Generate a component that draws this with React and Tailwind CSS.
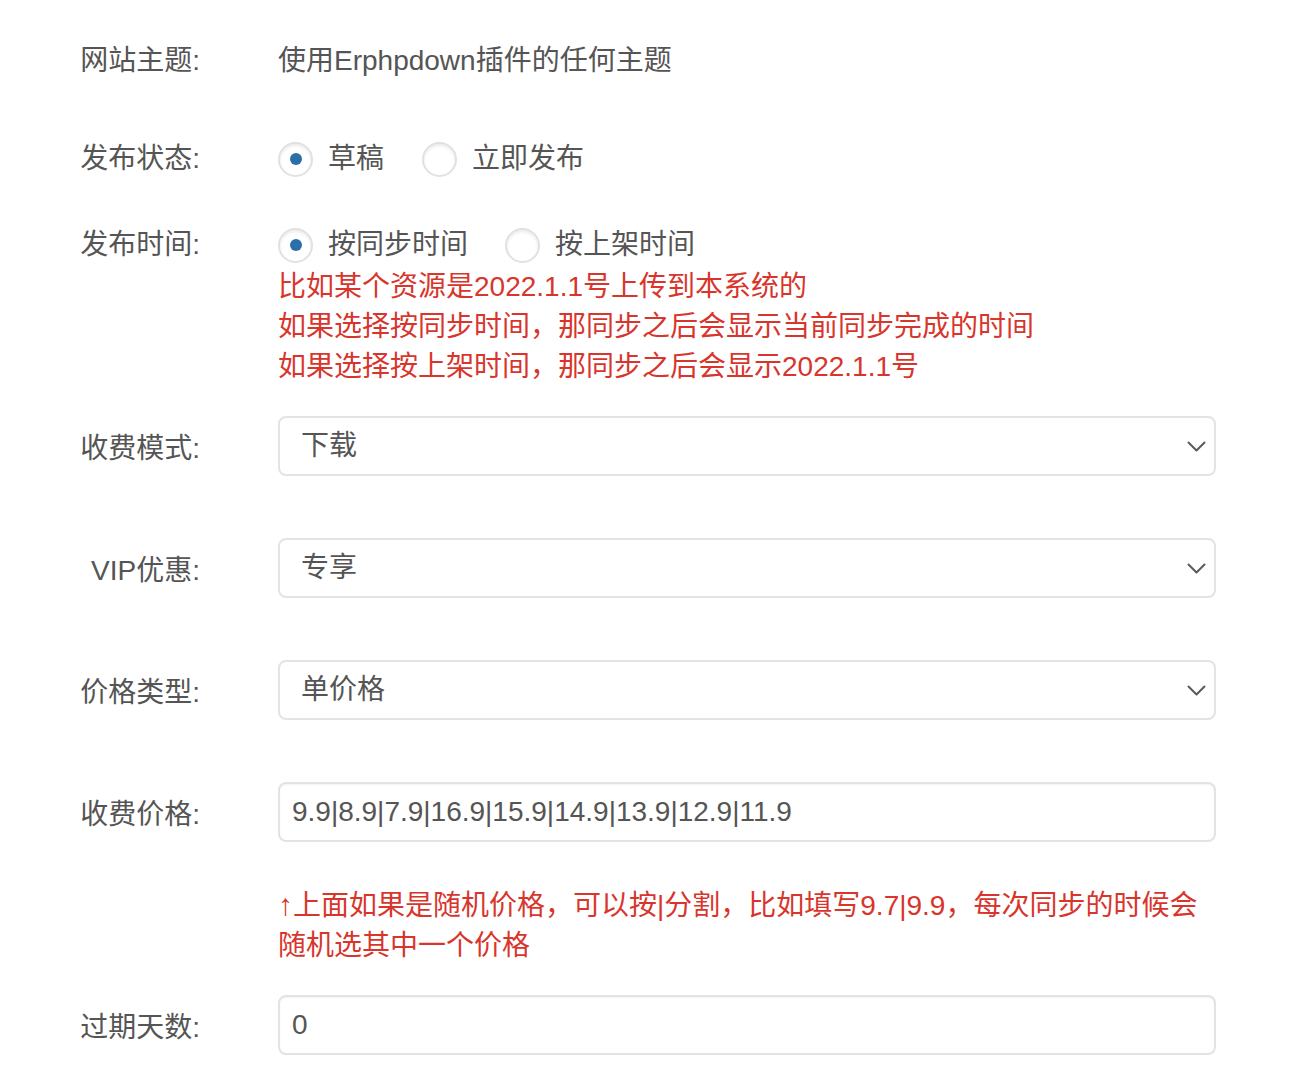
const Label = ({ children, className = '' }) => (
  <div className={`w-[200px] shrink-0 text-right ${className}`}>{children}</div>
);

const Radio = ({ checked, label }) => (
  <label className="flex items-center gap-[15px]">
    <span className="w-[35px] h-[35px] rounded-full border-2 border-[#e1e1e1] shadow-[inset_0_2px_3px_rgba(0,0,0,0.08)] flex items-center justify-center bg-white">
      {checked && <span className="w-[12px] h-[12px] rounded-full bg-[#2c6ea8]" />}
    </span>
    <span>{label}</span>
  </label>
);

const SelectBox = ({ value }) => (
  <div className="flex-1 h-[60px] rounded-[8px] border-2 border-[#e3e3e3] bg-white flex items-center justify-between pl-[21px] pr-[8px]">
    <span>{value}</span>
    <svg width="19" height="11" viewBox="0 0 19 11" fill="none">
      <polyline points="1.5,1.5 9.5,9.5 17.5,1.5" stroke="#5a5a5a" strokeWidth="2" strokeLinecap="round" strokeLinejoin="round" />
    </svg>
  </div>
);

const InputBox = ({ value }) => (
  <div className="flex-1 h-[60px] rounded-[8px] border-2 border-[#e3e3e3] bg-white shadow-[inset_0_1px_2px_rgba(0,0,0,0.05)] flex items-center pl-[12px]">
    <span>{value}</span>
  </div>
);

export default function App() {
  return (
    <div className="min-h-screen bg-white text-[28px] leading-[40px] text-[#555] font-['Liberation_Sans','Noto_Sans_CJK_SC',sans-serif] pt-[41px] pr-[88px]">
      {/* 网站主题 */}
      <div className="flex gap-[78px] items-center">
        <Label>网站主题:</Label>
        <div>使用Erphpdown插件的任何主题</div>
      </div>

      {/* 发布状态 */}
      <div className="flex gap-[78px] items-center mt-[58px]">
        <Label>发布状态:</Label>
        <div className="flex items-center gap-[38px]">
          <Radio checked label="草稿" />
          <Radio label="立即发布" />
        </div>
      </div>

      {/* 发布时间 */}
      <div className="flex gap-[78px] mt-[46px]">
        <Label>发布时间:</Label>
        <div className="flex-1">
          <div className="flex items-center gap-[37px] h-[40px]">
            <Radio checked label="按同步时间" />
            <Radio label="按上架时间" />
          </div>
          <div className="text-[#d8352c] mt-[2px]">
            <div>比如某个资源是2022.1.1号上传到本系统的</div>
            <div>如果选择按同步时间，那同步之后会显示当前同步完成的时间</div>
            <div>如果选择按上架时间，那同步之后会显示2022.1.1号</div>
          </div>
        </div>
      </div>

      {/* 收费模式 */}
      <div className="flex gap-[78px] items-center mt-[29px]">
        <Label className="pt-[5px]">收费模式:</Label>
        <SelectBox value="下载" />
      </div>

      <div className="flex gap-[78px] items-center mt-[62px]">
        <Label className="pt-[5px]">VIP优惠:</Label>
        <SelectBox value="专享" />
      </div>

      <div className="flex gap-[78px] items-center mt-[62px]">
        <Label className="pt-[5px]">价格类型:</Label>
        <SelectBox value="单价格" />
      </div>

      {/* 收费价格 */}
      <div className="flex gap-[78px] items-center mt-[62px]">
        <Label className="pt-[5px]">收费价格:</Label>
        <InputBox value="9.9|8.9|7.9|16.9|15.9|14.9|13.9|12.9|11.9" />
      </div>
      <div className="flex gap-[78px] mt-[43px]">
        <div className="w-[200px] shrink-0" />
        <div className="text-[#d8352c]">
          <div>
            <span className="text-[30px]">↑</span>上面如果是随机价格，可以按|分割，比如填写9.7|9.9，每次同步的时候会
          </div>
          <div>随机选其中一个价格</div>
        </div>
      </div>

      <div className="flex gap-[78px] items-center mt-[29px]">
        <Label className="pt-[5px]">过期天数:</Label>
        <InputBox value="0" />
      </div>
    </div>
  );
}
